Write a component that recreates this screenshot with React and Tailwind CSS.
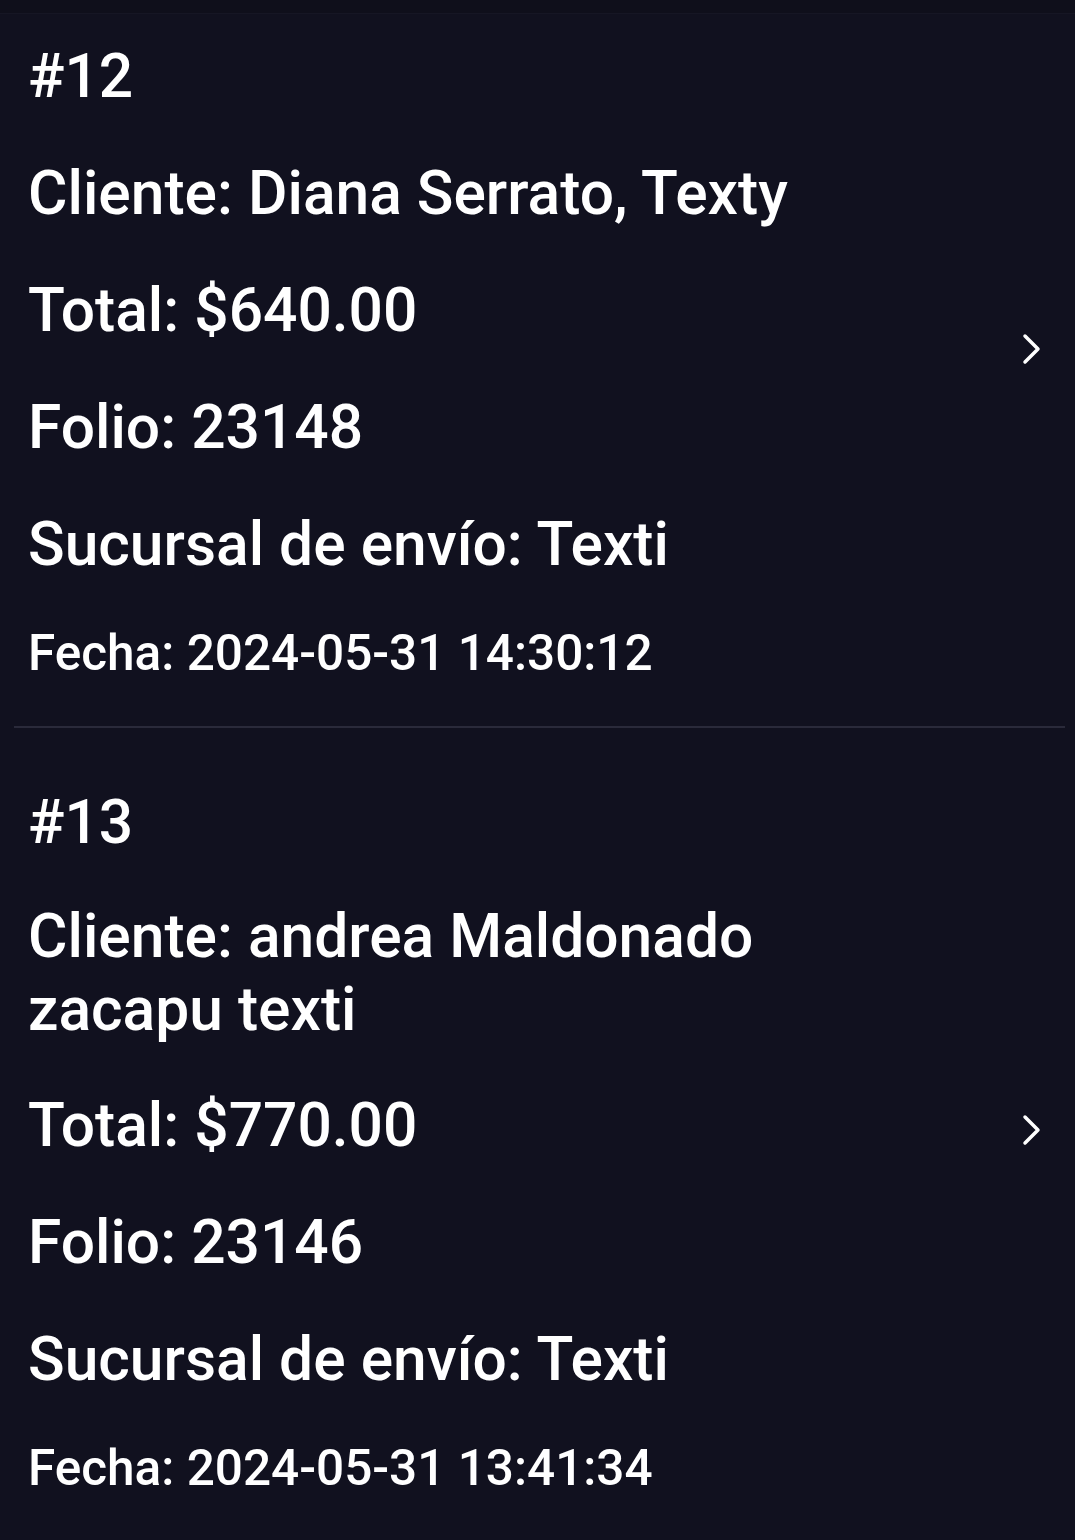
const orders = [
  {
    id: 12,
    cliente: 'Diana Serrato, Texty',
    total: '$640.00',
    folio: '23148',
    sucursal: 'Texti',
    fecha: '2024-05-31 14:30:12',
  },
  {
    id: 13,
    cliente: 'andrea Maldonado zacapu texti',
    total: '$770.00',
    folio: '23146',
    sucursal: 'Texti',
    fecha: '2024-05-31 13:41:34',
  },
]

const Chevron = () => (
  <svg width="22" height="32" viewBox="0 0 22 32" fill="none" className="shrink-0 mb-[27px]">
    <polyline
      points="4,3 17,16 4,29"
      stroke="#ffffff"
      strokeWidth="3.5"
      strokeLinecap="round"
      strokeLinejoin="round"
    />
  </svg>
)

const OrderRow = ({ order, first }) => (
  <div className={first ? 'flex items-center pl-[28px] pr-[32px] pt-[28px] pb-[43px]' : 'flex items-center pl-[28px] pr-[32px] pt-[60px] pb-[40px]'}>
    <div className="w-[790px] text-white font-medium">
      <div className="text-[60.5px] leading-[70px]">#{order.id}</div>
      <div className={first ? 'text-[60.5px] leading-[70px] mt-[47px]' : 'text-[60.5px] leading-[73px] mt-[42px]'}>
        Cliente: {order.cliente}
      </div>
      <div className={first ? 'text-[60.5px] leading-[70px] mt-[47px]' : 'text-[60.5px] leading-[70px] mt-[45px]'}>
        Total: {order.total}
      </div>
      <div className="text-[60.5px] leading-[70px] mt-[47px]">Folio: {order.folio}</div>
      <div className="text-[60.5px] leading-[70px] mt-[47px]">Sucursal de envío: {order.sucursal}</div>
      <div className="text-[49.5px] leading-[60px] mt-[43px]">Fecha: {order.fecha}</div>
    </div>
    <div className="flex-1" />
    <Chevron />
  </div>
)

export default function App() {
  return (
    <div className="min-h-[1540px] w-full bg-[#11111f] font-[family-name:Roboto,sans-serif]">
      <div className="h-[14px] bg-[#0f0f1b] border-b border-[#161624]" />
      {orders.map((order, i) => (
        <div key={order.id}>
          {i > 0 && <div className="ml-[14px] mr-[10px] h-[2px] bg-[#2a2a3a]" />}
          <OrderRow order={order} first={i === 0} />
        </div>
      ))}
    </div>
  )
}
